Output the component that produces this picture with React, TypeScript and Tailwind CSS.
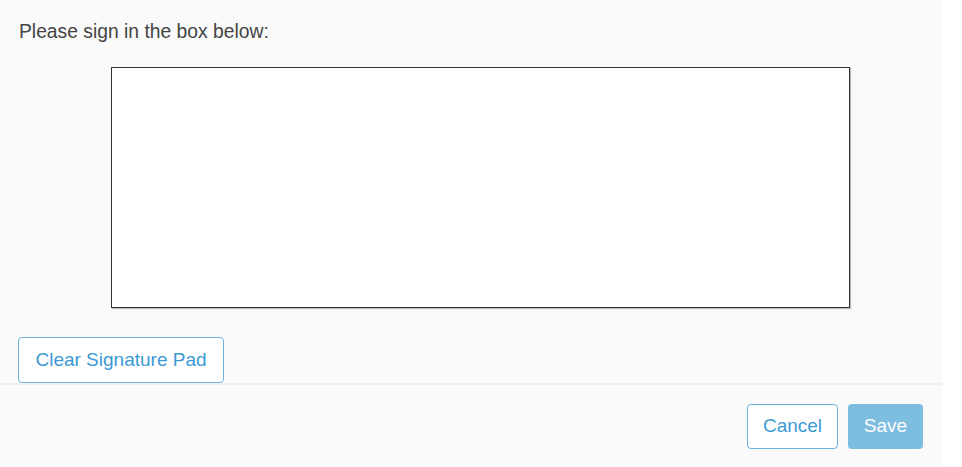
import React from 'react';

// --- Signature dialog ---
const SignaturePad: React.FC = () => (
  <div className="ml-[93px] mt-[24px] w-[739px] h-[241px] bg-white border border-[#333] shadow-[1px_1px_1px_rgba(0,0,0,0.25)]" />
);

const App: React.FC = () => {
  return (
    <div className="flex w-[962px] h-[467px] bg-white font-['Liberation_Sans',Arial,sans-serif]">
      <div className="flex flex-col w-[943px] h-full bg-[#fafafa]">
        <div className="px-[18px] pt-[21px]">
          <p className="text-[19.3px] leading-[22px] text-[#444] pl-px">Please sign in the box below:</p>
          <SignaturePad />
          <button className="mt-[29px] h-[46px] w-[206px] rounded-[4px] border border-[#6db3dc] bg-white text-[19px] text-[#3b9ad4]">
            Clear Signature Pad
          </button>
        </div>
        <div className="flex justify-end gap-[10px] border-t-2 border-[#efefef] pt-[19px] pr-[20px]">
          <button className="h-[45px] w-[91px] rounded-[4px] border border-[#6db3dc] bg-white text-[19px] text-[#3b9ad4]">
            Cancel
          </button>
          <button className="h-[45px] w-[75px] rounded-[4px] bg-[#7dbde0] text-[19px] text-white">
            Save
          </button>
        </div>
      </div>
    </div>
  );
};

export default App;
